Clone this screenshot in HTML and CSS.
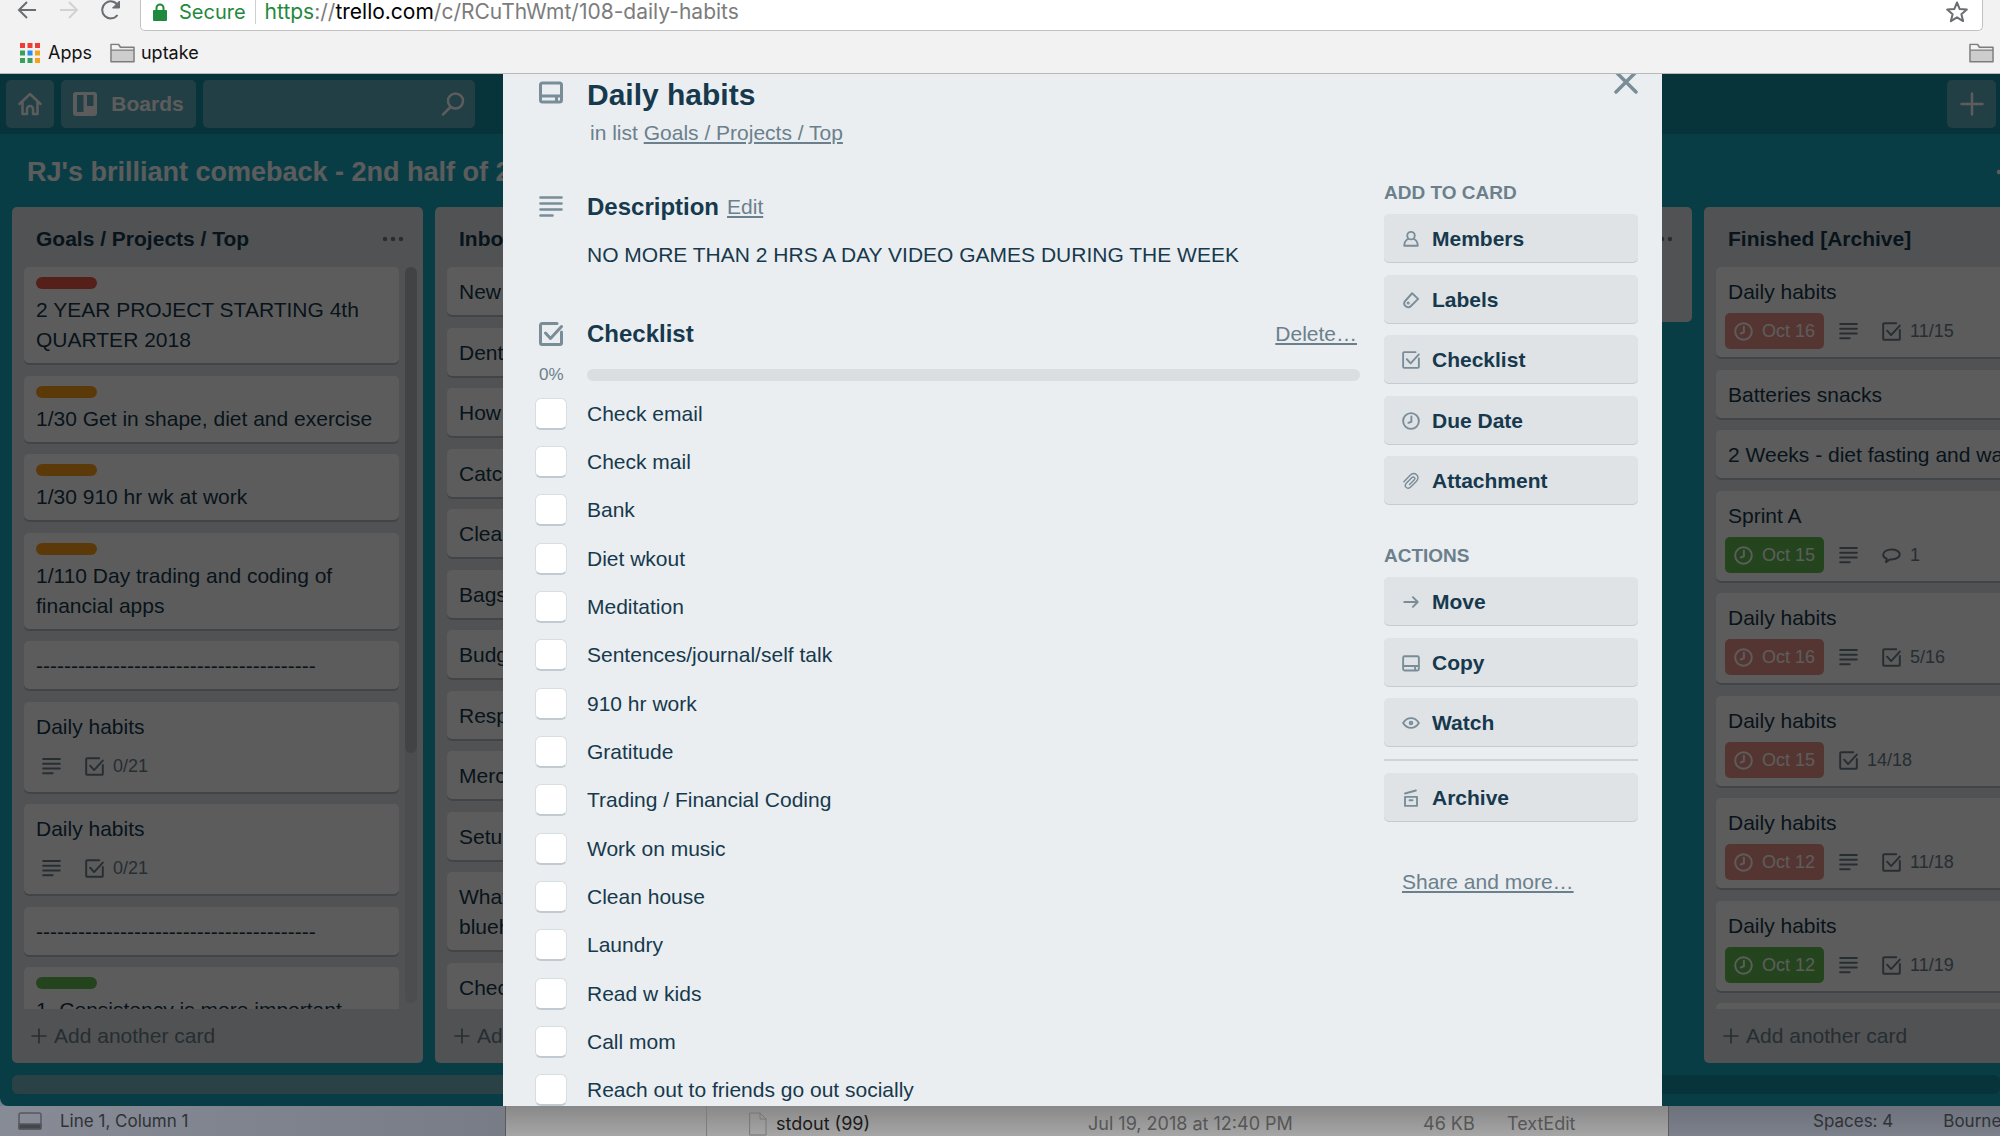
FILE: index.html
```html
<!DOCTYPE html>
<html lang="en">

<head>
    <meta charset="UTF-8">
    <title>Daily habits | Trello</title>
    <link rel="stylesheet" href="styles.css">
</head>

<body>
    <svg class="sprite" aria-hidden="true">
        <symbol id="i-desc" viewBox="0 0 24 24">
            <path d="M1.5 2.500h21M1.5 8.500h21M1.5 14.500h21M1.5 20.500h12" stroke-width="2.6" />
        </symbol>
        <symbol id="i-check" viewBox="0 0 24 24">
            <path d="M18 1.5H3A1.5 1.5 0 0 0 1.5 3v18A1.5 1.5 0 0 0 3 22.500h18a1.500 1.500 0 0 0 1.500-1.500V10" />
            <path d="M6.500 11l5 5.500L22.500 4.500" />
        </symbol>
        <symbol id="i-card" viewBox="0 0 24 24">
            <rect x="1.500" y="3" width="21" height="19" rx="2" />
            <path d="M2 16h20M17.500 16v5" />
        </symbol>
        <symbol id="i-clock" viewBox="0 0 24 24">
            <circle cx="12" cy="12" r="10.500" />
            <path d="M12.500 6v7L8.500 14.500" />
        </symbol>
        <symbol id="i-comment" viewBox="0 0 24 24">
            <path d="M5 20.500L6 16C3 15 1.500 13 1.500 11c0-3.800 4.500-6.500 10.500-6.500s10.500 2.500 10.500 6-4.500 6.500-10.500 6.500c-.6 0-1.500 0-2-.1z" />
        </symbol>
        <symbol id="i-member" viewBox="0 0 24 24">
            <circle cx="12" cy="7.500" r="5" />
            <path d="M8 12c-3 1.500-5 4-5 9h18c0-5-2-7.500-5-9" />
        </symbol>
        <symbol id="i-label" viewBox="0 0 24 24">
            <path d="M13.500 3l8 7.500-9.500 9.500c-2.500 2.500-5.500 2-7.500 0s-2-4.800 0-7z" />
            <circle cx="8.300" cy="16" r=".8" />
        </symbol>
        <symbol id="i-clip" viewBox="0 0 24 24">
            <path d="M2.500 13L10.500 4.800c3-3 6.500-3.300 9-1s2.300 6-.5 8.800l-7.500 7.500c-2 2-4.500 2-6 .4s-1.300-4 .5-5.800l7-7c1.300-1.300 2.600-1.200 3.500-.3s.8 2.200-.4 3.400l-6 6" stroke-width="1.900" />
        </symbol>
        <symbol id="i-arrow" viewBox="0 0 24 24">
            <path d="M3 12h18M14.500 5.500L21 12l-6.500 6.500" />
        </symbol>
        <symbol id="i-eye" viewBox="0 0 24 24">
            <path d="M1.500 12C4 8 7.500 5.500 12 5.500S20 8 22.500 12C20 16 16.500 18.500 12 18.500S4 16 1.500 12z" />
            <circle cx="12" cy="12" r="1.800" />
        </symbol>
        <symbol id="i-archive" viewBox="0 0 24 24">
            <path d="M4 10.500h16v12H4zM10 15h4M4 6L18.500 2" />
        </symbol>
        <symbol id="i-plus" viewBox="0 0 24 24">
            <path d="M12 1.500v21M1.500 12h21" />
        </symbol>
        <symbol id="i-x" viewBox="0 0 24 24">
            <path d="M2 2l20 20M22 2L2 22" stroke-width="3.500" />
        </symbol>
        <symbol id="i-dots" viewBox="0 0 24 24">
            <path d="M4 12h.01M12 12h.01M20 12h.01" stroke-width="4.500" />
        </symbol>
        <symbol id="i-folder" viewBox="0 0 26 20">
            <path d="M1 19V1h8l2 3h14v15zM1 7h24" fill="#cdcdcd" stroke="#7d7d7d" stroke-width="1.500" />
            <path d="M2 6V2h6l2 3h14v1z" fill="#f4f4f4" stroke="none" />
        </symbol>
    </svg>

    <div class="chrome">
        <div class="toolbar">
            <button class="tool" aria-label="Back"><svg viewBox="0 0 20 20"><path d="M19 10H2M10 2l-8 8 8 8" /></svg></button>
            <button class="tool off" aria-label="Forward"><svg viewBox="0 0 20 20"><path d="M1 10h17M10 2l8 8-8 8" /></svg></button>
            <button class="tool" aria-label="Reload"><svg viewBox="0 0 20 20"><path d="M16.500 15A8.500 8.500 0 1 1 17 5.500" /><path d="M18.500 1v7h-7z" fill="currentColor" stroke-width="1" /></svg></button>
            <div class="address">
                <svg class="lock" viewBox="0 0 14 18"><path d="M1 8h12v9H1z" fill="currentColor" /><path d="M3.500 8V5a3.500 3.500 0 0 1 7 0v3" /></svg>
                <span class="secure">Secure</span>
                <span class="url"><span class="scheme">https</span>://<b>trello.com</b>/c/RCuThWmt/108-daily-habits</span>
                <svg class="star" viewBox="0 0 22 22"><path d="M11 1.500l2.700 6.600 7.100.5-5.400 4.600 1.700 6.900-6.100-3.800-6.100 3.800 1.700-6.900L1.200 8.600l7.100-.5z" /></svg>
            </div>
        </div>
        <div class="bookmarks">
            <a href="#">
                <svg class="apps" viewBox="0 0 20 20">
                    <path d="M0 0h5v5H0zM7.500 0h5v5h-5zM15 0h5v5h-5z" fill="#f03c36" />
                    <path d="M0 7.500h5v5H0zM0 15h5v5H0zM7.500 15h5v5h-5z" fill="#35a15a" />
                    <path d="M7.500 7.500h5v5h-5z" fill="#2a8cf0" />
                    <path d="M15 7.500h5v5h-5zM15 15h5v5h-5z" fill="#f5a31f" />
                </svg>
                Apps</a>
            <a href="#"><svg class="folder"><use href="#i-folder" /></svg>uptake</a>
            <a href="#" class="other"><svg class="folder"><use href="#i-folder" /></svg>Other Bookmarks</a>
        </div>
    </div>

    <div class="trello">
        <header class="topbar">
            <button class="top-btn home" aria-label="Home"><svg viewBox="0 0 24 24"><path d="M1.500 12L12 2l10.500 10M4.500 10v12H9v-5a3 3 0 0 1 6 0v5h4.500V10" /></svg></button>
            <button class="top-btn boards"><svg viewBox="0 0 24 24"><path d="M3 0h18a3 3 0 0 1 3 3v18a3 3 0 0 1-3 3H3a3 3 0 0 1-3-3V3a3 3 0 0 1 3-3zM4 3v17h6.500V3zM14 3v11h6.500V3z" /></svg>Boards</button>
            <label class="search">
                <input type="text" aria-label="Search">
                <svg viewBox="0 0 24 24"><circle cx="14.500" cy="9" r="7.500" /><path d="M9.500 15L2 22.500" /></svg>
            </label>
            <button class="top-btn add" aria-label="Create"><svg><use href="#i-plus" /></svg></button>
        </header>

        <div class="board-head">
            <h1>RJ's brilliant comeback - 2nd half of 2018</h1>
            <button class="show-menu"><svg><use href="#i-dots" /></svg>Show Menu</button>
        </div>

        <div class="lists">
            <section class="list">
                <div class="list-head">
                    <h2>Goals / Projects / Top</h2>
                    <button aria-label="List menu"><svg><use href="#i-dots" /></svg></button>
                </div>
                <div class="cards">
                    <div class="card"><span class="tag red"></span>2 YEAR PROJECT STARTING 4th QUARTER 2018</div>
                    <div class="card"><span class="tag orange"></span>1/30 Get in shape, diet and exercise</div>
                    <div class="card"><span class="tag orange"></span>1/30 910 hr wk at work</div>
                    <div class="card"><span class="tag orange"></span>1/110 Day trading and coding of financial apps</div>
                    <div class="card">----------------------------------------</div>
                    <div class="card">Daily habits
                        <div class="badges"><span><svg><use href="#i-desc" /></svg></span><span><svg><use href="#i-check" /></svg>0/21</span></div>
                    </div>
                    <div class="card">Daily habits
                        <div class="badges"><span><svg><use href="#i-desc" /></svg></span><span><svg><use href="#i-check" /></svg>0/21</span></div>
                    </div>
                    <div class="card">----------------------------------------</div>
                    <div class="card"><span class="tag green"></span>1. Consistency is more important</div>
                    <div class="scroll"><div class="thumb"></div></div>
                </div>
                <button class="add-card"><svg><use href="#i-plus" /></svg>Add another card</button>
            </section>

            <section class="list">
                <div class="list-head">
                    <h2>Inbox</h2>
                </div>
                <div class="cards">
                    <div class="card">New</div>
                    <div class="card">Dentist</div>
                    <div class="card">How</div>
                    <div class="card">Catch up</div>
                    <div class="card">Clean</div>
                    <div class="card">Bags</div>
                    <div class="card">Budget</div>
                    <div class="card">Respond</div>
                    <div class="card">Merch</div>
                    <div class="card">Setup</div>
                    <div class="card">What<br>bluehost</div>
                    <div class="card">Check</div>
                </div>
                <button class="add-card"><svg><use href="#i-plus" /></svg>Add another card</button>
            </section>

            <section class="list short"></section>

            <section class="list short">
                <div class="list-head">
                    <h2></h2>
                    <button aria-label="List menu"><svg><use href="#i-dots" /></svg></button>
                </div>
            </section>

            <section class="list">
                <div class="list-head">
                    <h2>Finished [Archive]</h2>
                </div>
                <div class="cards">
                    <div class="card">Daily habits
                        <div class="badges"><span class="late"><svg><use href="#i-clock" /></svg>Oct 16</span><span><svg><use href="#i-desc" /></svg></span><span><svg><use href="#i-check" /></svg>11/15</span></div>
                    </div>
                    <div class="card">Batteries snacks</div>
                    <div class="card">2 Weeks - diet fasting and walk</div>
                    <div class="card">Sprint A
                        <div class="badges"><span class="done"><svg><use href="#i-clock" /></svg>Oct 15</span><span><svg><use href="#i-desc" /></svg></span><span><svg><use href="#i-comment" /></svg>1</span></div>
                    </div>
                    <div class="card">Daily habits
                        <div class="badges"><span class="late"><svg><use href="#i-clock" /></svg>Oct 16</span><span><svg><use href="#i-desc" /></svg></span><span><svg><use href="#i-check" /></svg>5/16</span></div>
                    </div>
                    <div class="card">Daily habits
                        <div class="badges"><span class="late"><svg><use href="#i-clock" /></svg>Oct 15</span><span><svg><use href="#i-check" /></svg>14/18</span></div>
                    </div>
                    <div class="card">Daily habits
                        <div class="badges"><span class="late"><svg><use href="#i-clock" /></svg>Oct 12</span><span><svg><use href="#i-desc" /></svg></span><span><svg><use href="#i-check" /></svg>11/18</span></div>
                    </div>
                    <div class="card">Daily habits
                        <div class="badges"><span class="done"><svg><use href="#i-clock" /></svg>Oct 12</span><span><svg><use href="#i-desc" /></svg></span><span><svg><use href="#i-check" /></svg>11/19</span></div>
                    </div>
                    <div class="card">&nbsp;</div>
                </div>
                <button class="add-card"><svg><use href="#i-plus" /></svg>Add another card</button>
            </section>
        </div>
        <div class="board-scroll"><div class="thumb"></div></div>

        <div class="overlay">
            <div class="window">
                <button class="close" aria-label="Close"><svg><use href="#i-x" /></svg></button>
                <div class="window-head">
                    <svg class="icon"><use href="#i-card" /></svg>
                    <div>
                        <h2>Daily habits</h2>
                        <p>in list <a href="#">Goals / Projects / Top</a></p>
                    </div>
                </div>
                <div class="window-body">
                    <div class="main">
                        <div class="section-head">
                            <svg class="icon"><use href="#i-desc" /></svg>
                            <h3>Description</h3>
                            <a href="#">Edit</a>
                        </div>
                        <p class="description">NO MORE THAN 2 HRS A DAY VIDEO GAMES DURING THE WEEK</p>

                        <div class="section-head checklist-head">
                            <svg class="icon"><use href="#i-check" /></svg>
                            <h3>Checklist</h3>
                            <a href="#" class="delete">Delete…</a>
                        </div>
                        <div class="progress">
                            <span>0%</span>
                            <div class="bar"></div>
                        </div>
                        <div class="items">
                            <label><input type="checkbox">Check email</label>
                            <label><input type="checkbox">Check mail</label>
                            <label><input type="checkbox">Bank</label>
                            <label><input type="checkbox">Diet wkout</label>
                            <label><input type="checkbox">Meditation</label>
                            <label><input type="checkbox">Sentences/journal/self talk</label>
                            <label><input type="checkbox">910 hr work</label>
                            <label><input type="checkbox">Gratitude</label>
                            <label><input type="checkbox">Trading / Financial Coding</label>
                            <label><input type="checkbox">Work on music</label>
                            <label><input type="checkbox">Clean house</label>
                            <label><input type="checkbox">Laundry</label>
                            <label><input type="checkbox">Read w kids</label>
                            <label><input type="checkbox">Call mom</label>
                            <label><input type="checkbox">Reach out to friends go out socially</label>
                        </div>
                    </div>
                    <div class="side">
                        <h4>ADD TO CARD</h4>
                        <div class="buttons">
                            <button><svg><use href="#i-member" /></svg>Members</button>
                            <button><svg><use href="#i-label" /></svg>Labels</button>
                            <button><svg><use href="#i-check" /></svg>Checklist</button>
                            <button><svg><use href="#i-clock" /></svg>Due Date</button>
                            <button><svg><use href="#i-clip" /></svg>Attachment</button>
                        </div>
                        <h4>ACTIONS</h4>
                        <div class="buttons">
                            <button><svg><use href="#i-arrow" /></svg>Move</button>
                            <button><svg><use href="#i-card" /></svg>Copy</button>
                            <button><svg><use href="#i-eye" /></svg>Watch</button>
                        </div>
                        <hr>
                        <div class="buttons">
                            <button><svg><use href="#i-archive" /></svg>Archive</button>
                        </div>
                        <a href="#" class="share">Share and more…</a>
                    </div>
                </div>
            </div>
        </div>
    </div>

    <!-- windows that stick out under the browser -->
    <div class="behind">
        <div class="editor-left">
            <svg viewBox="0 0 24 18"><rect x="1" y="1" width="22" height="16" rx="2" /><path d="M1 12h22v5H1z" fill="#43464c" /></svg>
            Line 1, Column 1
        </div>
        <div class="finder">
            <svg viewBox="0 0 18 24"><path d="M1 1h10l6 6v16H1zM11 1v6h6" /></svg>
            <span class="name">stdout (99)</span>
            <span class="date">Jul 19, 2018 at 12:40 PM</span>
            <span class="size">46 KB</span>
            <span>TextEdit</span>
        </div>
        <div class="editor-right">
            <span>Spaces: 4</span>
            <span>Bourne Again Shell</span>
        </div>
    </div>
</body>

</html>
```

FILE: styles.css
```css
* {
    box-sizing: border-box;
}

body {
    margin: 0;
    height: 100vh;
    display: flex;
    flex-direction: column;
    overflow: hidden;
    font-family: "Liberation Sans", Arial, sans-serif;
    font-size: 21px;
    line-height: 30px;
    color: #17394d;
    background-color: #787d87;
}

h1,
h2,
h3,
h4,
p {
    margin: 0;
}

button {
    font: inherit;
    color: inherit;
    border: none;
    padding: 0;
    background: none;
    cursor: pointer;
}

svg {
    flex: none;
    fill: none;
    stroke: currentColor;
    stroke-width: 2.5;
    stroke-linecap: round;
    stroke-linejoin: round;
}

.sprite {
    position: absolute;
    width: 0;
    height: 0;
}

/* browser */
.chrome {
    flex: none;
    background-color: #f2f2f2;
    border-bottom: 1px solid #b9b9b9;
    font-family: Inter, Roboto, sans-serif;
    font-size: 18px;
    color: #111;
    overflow: hidden;
}

.toolbar {
    height: 31px;
    display: flex;
    gap: 22px;
    padding: 0 17px;
}

.tool {
    width: 20px;
    height: 20px;
    color: #6a6d71;
}

.tool svg {
    display: block;
    width: 20px;
    height: 20px;
    stroke-width: 2;
    stroke-linecap: butt;
    stroke-linejoin: miter;
}

.tool.off {
    color: #d2d2d2;
}

.address {
    flex: 1;
    display: flex;
    align-items: center;
    margin-left: -3px;
    padding: 0 14px 7px 12px;
    background-color: #fff;
    border: 1px solid #c2c2c2;
    border-top: none;
    border-radius: 0 0 5px 5px;
    font-size: 20px;
    line-height: 24px;
}

.lock {
    width: 14px;
    height: 18px;
    margin-right: 12px;
    color: #1f8a3d;
    stroke-width: 2;
}

.secure,
.scheme {
    color: #1f8a3d;
}

.secure {
    padding-right: 9px;
    border-right: 1px solid #cfcfcf;
}

.url {
    flex: 1;
    padding-left: 9px;
    font-size: 21px;
    color: #7c7c7c;
}

.url b {
    font-weight: normal;
    color: #000;
}

.star {
    width: 22px;
    height: 22px;
    color: #6a6d71;
    stroke-width: 2;
}

.bookmarks {
    height: 42px;
    display: flex;
    align-items: center;
    gap: 18px;
    padding: 1px 0 0 20px;
}

.bookmarks a {
    display: flex;
    align-items: center;
    gap: 6px;
    color: #111;
    text-decoration: none;
    white-space: nowrap;
}

.bookmarks .other {
    margin-left: auto;
    margin-right: -148px;
}

.apps {
    width: 20px;
    height: 20px;
    margin-right: 2px;
    stroke: none;
}

.folder {
    width: 25px;
    height: 20px;
}

/* board */
.trello {
    flex: 1;
    min-height: 0;
    position: relative;
    display: flex;
    flex-direction: column;
    overflow: hidden;
    background-color: #1aa9c2;
    border-radius: 0 0 0 8px;
}

.topbar {
    flex: none;
    display: flex;
    gap: 7px;
    padding: 6px 4px 6px 6px;
    background-color: rgba(0, 0, 0, 0.15);
    color: #fff;
}

.top-btn,
.search {
    height: 48px;
    display: flex;
    align-items: center;
    justify-content: center;
    gap: 14px;
    border-radius: 5px;
    background-color: rgba(255, 255, 255, 0.3);
    font-weight: bold;
}

.top-btn svg,
.search svg {
    width: 24px;
    height: 24px;
}

.home {
    width: 48px;
}

.boards {
    width: 135px;
}

.boards svg {
    fill: currentColor;
    fill-rule: evenodd;
    stroke: none;
}

.search {
    width: 272px;
    padding-right: 10px;
}

.search input {
    flex: 1;
    min-width: 0;
    height: 48px;
    border: none;
    background: none;
    font: inherit;
}

.add {
    width: 49px;
    margin-left: auto;
}

.board-head {
    flex: none;
    display: flex;
    align-items: center;
    justify-content: space-between;
    height: 73px;
    padding: 2px 0 0 27px;
    color: #fff;
    white-space: nowrap;
}

.board-head h1 {
    font-size: 27px;
}

.show-menu {
    display: flex;
    align-items: center;
    gap: 6px;
    margin-right: -136px;
}

.show-menu svg {
    width: 24px;
    height: 24px;
}

.lists {
    flex: 1;
    min-height: 0;
    display: flex;
    align-items: stretch;
    gap: 12px;
    padding: 0 12px;
}

.list {
    flex: none;
    width: 411px;
    display: flex;
    flex-direction: column;
    background-color: #dfe3e6;
    border-radius: 5px;
}

.list.short {
    height: 115px;
}

.list-head {
    display: flex;
    align-items: center;
    justify-content: space-between;
    padding: 17px 18px 13px 24px;
}

.list-head h2 {
    min-height: 30px;
    font-size: 21px;
}

.list-head button,
.list-head svg {
    display: block;
    width: 24px;
    height: 24px;
    color: #6b808c;
}

.cards {
    flex: 1;
    min-height: 0;
    position: relative;
    overflow: hidden;
    padding: 0 24px 0 12px;
}

.card {
    padding: 10px 12px 8px;
    margin-bottom: 12px;
    background-color: #fff;
    border-radius: 5px;
    box-shadow: 0 2px 0 #b7bfc4;
    overflow: hidden;
}

.card:nth-child(odd) {
    margin-bottom: 13px;
}

.tag {
    display: block;
    width: 61px;
    height: 12px;
    margin-bottom: 6px;
    border-radius: 6px;
}

.red {
    background-color: #eb5a46;
}

.orange {
    background-color: #ff9f1a;
}

.green {
    background-color: #61bd4f;
}

.badges {
    display: flex;
    gap: 6px;
    margin: 6px 0 0 -3px;
    font-size: 18px;
    color: #6b808c;
}

.badges span {
    display: flex;
    align-items: center;
    gap: 9px;
    height: 36px;
    padding: 0 9px;
    border-radius: 5px;
}

.badges svg {
    width: 19px;
    height: 19px;
}

.badges .late,
.badges .done {
    color: #fff;
    background-color: #ec9488;
}

.badges .done {
    background-color: #61bd4f;
}

/* scrollbar sits in the gutter beside the cards */
.scroll {
    position: absolute;
    top: 0;
    right: 6px;
    bottom: 6px;
    width: 12px;
    border-radius: 6px;
    background-color: #d0d5d8;
}

.scroll .thumb {
    height: 66%;
    border-radius: 6px;
    background-color: #b6bbbf;
}

.add-card {
    flex: none;
    display: flex;
    align-items: center;
    gap: 7px;
    height: 54px;
    padding-left: 19px;
    color: #6b808c;
}

.add-card svg {
    width: 16px;
    height: 16px;
}

.board-scroll {
    flex: none;
    height: 19px;
    margin: 12px 0 12px 12px;
    border-radius: 6px;
    background-color: rgba(0, 0, 0, 0.15);
}

.board-scroll .thumb {
    width: 60%;
    height: 19px;
    border-radius: 6px;
    background-color: #75b7c2;
}

/* card window */
.overlay {
    position: absolute;
    top: 0;
    left: 0;
    right: -165px;
    bottom: 0;
    display: flex;
    justify-content: center;
    background-color: rgba(0, 0, 0, 0.64);
}

.window {
    position: relative;
    width: 1159px;
    padding: 6px 24px 0 36px;
    overflow: hidden;
    background-color: #eaeef0;
}

.window a {
    color: #6b808c;
}

.icon {
    width: 24px;
    height: 24px;
    margin-right: 24px;
    color: #798d99;
    stroke-width: 3;
}

.close {
    position: absolute;
    top: -4px;
    right: 24px;
    color: #798d99;
}

.close svg {
    display: block;
    width: 24px;
    height: 24px;
}

.window-head {
    display: flex;
    align-items: flex-start;
}

.window-head h2 {
    font-size: 30px;
}

.window-head p {
    margin: 8px 0 0 3px;
    color: #6b808c;
}

.window-body {
    display: flex;
    gap: 24px;
    margin-top: 33px;
}

.main {
    flex: 1;
    padding-top: 11px;
}

.section-head {
    display: flex;
    align-items: center;
}

.section-head h3 {
    margin-right: 8px;
    font-size: 24px;
}

.delete {
    margin-left: auto;
    margin-right: 3px;
}

.description {
    margin: 18px 0 49px 48px;
}

.progress {
    display: flex;
    align-items: center;
    height: 24px;
    margin: 14px 0 11px;
    font-size: 17px;
    color: #6b808c;
}

.progress span {
    width: 48px;
}

.bar {
    flex: 1;
    height: 12px;
    border-radius: 6px;
    background-color: #dadee1;
}

.items label {
    display: flex;
    align-items: center;
    height: 32px;
    margin: 0 0 16px -4px;
}

.items label:nth-child(3n) {
    margin-bottom: 17px;
}

.items input {
    appearance: none;
    width: 32px;
    height: 32px;
    margin: 0 20px 0 0;
    background-color: #fff;
    border: 1px solid #d6dee1;
    border-bottom: 2px solid #c0cad0;
    border-radius: 6px;
}

.side {
    flex: none;
    width: 254px;
}

.side h4 {
    margin-bottom: 9px;
    font-size: 19px;
    line-height: 24px;
    color: #6b808c;
}

.buttons + h4 {
    margin-top: 40px;
}

.buttons button {
    display: flex;
    align-items: center;
    gap: 12px;
    width: 100%;
    height: 48px;
    margin-bottom: 12px;
    padding: 1px 0 0 18px;
    font-weight: bold;
    background-color: #dfe3e6;
    border-radius: 5px;
    box-shadow: 0 1px 0 #c2ccd1;
}

.buttons button:nth-child(odd) {
    margin-bottom: 13px;
}

.buttons svg {
    width: 18px;
    height: 18px;
    color: #798d99;
}

.side hr {
    height: 2px;
    margin: 0 0 12px;
    border: none;
    background-color: #cdd3d6;
}

.share {
    display: inline-block;
    margin: 33px 0 0 18px;
}

/* bottom strip */
.behind {
    flex: none;
    height: 30px;
    display: flex;
    font-family: Inter, Roboto, sans-serif;
    font-size: 17px;
    color: #303236;
    white-space: nowrap;
    background: linear-gradient(#6c717b, #7c818b);
}

.editor-left {
    flex: none;
    width: 505px;
    display: flex;
    align-items: center;
    gap: 18px;
    padding-left: 18px;
    background: linear-gradient(to right, #868b96, #777c86);
}

.editor-left svg {
    width: 24px;
    height: 18px;
    color: #55585e;
    stroke-width: 1.5;
}

.finder {
    flex: none;
    width: 1164px;
    display: flex;
    align-items: center;
    padding: 5px 0 0 243px;
    color: #565656;
    border-left: 1px solid #5a5a5a;
    border-right: 1px solid #5a5a5a;
    background: linear-gradient(to right, transparent 200px, #7c7c7c 200px, #7c7c7c 201px, transparent 201px), linear-gradient(#888, #a6a6a6);
    font-size: 18px;
}

.finder svg {
    width: 18px;
    height: 24px;
    color: #777;
    stroke-width: 1;
}

.finder .name {
    width: 321px;
    padding-left: 9px;
    color: #1a1a1a;
}

.finder .date {
    width: 335px;
}

.finder .size {
    width: 84px;
}

.editor-right {
    flex: 1;
    display: flex;
    align-items: center;
    gap: 50px;
    padding-left: 144px;
    overflow: hidden;
}
```
